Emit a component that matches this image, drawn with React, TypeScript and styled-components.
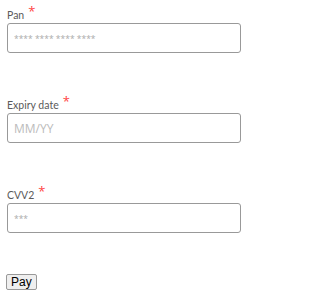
import React from "react";
import styled, { createGlobalStyle } from "styled-components";

const GlobalStyle = createGlobalStyle`
  body {
    margin: 0;
    background: #fff;
  }
`;

const Form = styled.form`
  padding: 7px 14px 0 7px;
  display: flex;
  flex-direction: column;
`;

const Field = styled.div`
  display: flex;
  flex-direction: column;
  margin-bottom: 44px;
`;

const Label = styled.label`
  font-family: Lato, "Open Sans", sans-serif;
  font-size: 10.5px;
  line-height: 16px;
  color: #5a5a5a;
`;

const Required = styled.span`
  color: #f44;
  font-family: "Open Sans", sans-serif;
  font-size: 13px;
  line-height: 0;
  position: relative;
  top: -3px;
  margin-left: 4px;
`;

const Input = styled.input<{ $small?: boolean }>`
  box-sizing: border-box;
  width: 234px;
  height: 30px;
  margin: 0;
  padding: 0 6px;
  border: 1px solid #999;
  border-radius: 3px;
  font-family: "Open Sans", "Noto Sans", sans-serif;
  font-size: ${(p) => (p.$small ? "8.5px" : "12px")};
  color: #333;
  outline: none;

  &::placeholder {
    color: ${(p) => (p.$small ? "#aaa" : "#bbb")};
  }
`;

const PayButton = styled.button`
  align-self: flex-start;
  margin-top: -3px;
  margin-left: -1px;
  height: 16px;
  padding: 0 4px;
  font-family: "Liberation Sans", Arial, sans-serif;
  font-size: 12px;
  line-height: 14px;
  color: #000;
  background: #efefef;
  border: 1px solid #999;
  border-radius: 2px;
`;

export default function App() {
  return (
    <>
      <GlobalStyle />
      <Form onSubmit={(e) => e.preventDefault()}>
        <Field>
          <Label>
            Pan<Required>*</Required>
          </Label>
          <Input $small placeholder="**** **** **** ****" />
        </Field>
        <Field>
          <Label>
            Expiry date<Required>*</Required>
          </Label>
          <Input placeholder="MM/YY" />
        </Field>
        <Field>
          <Label>
            CVV2<Required>*</Required>
          </Label>
          <Input $small placeholder="***" />
        </Field>
        <PayButton type="submit">Pay</PayButton>
      </Form>
    </>
  );
}
